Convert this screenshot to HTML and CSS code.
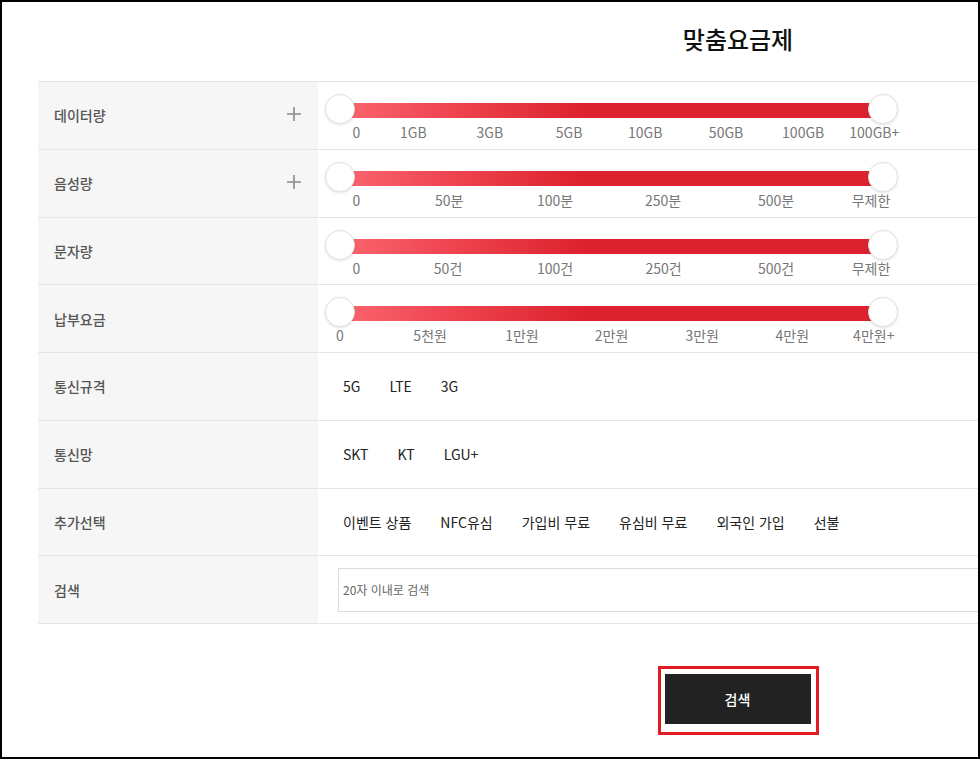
FILE: index.html
```html
<!DOCTYPE html>
<html lang="ko">
<head>
<meta charset="utf-8">
<title>맞춤요금제</title>
<link rel="stylesheet" href="styles.css">
</head>
<body>
<div class="frame">
  <div class="page">
    <h1 class="title">맞춤요금제</h1>
    <div class="table">
      <div class="row">
        <div class="label"><span>데이터량</span>
          <svg class="plus" width="14" height="14" viewBox="0 0 14 14"><path d="M7 0V14M0 7H14" stroke="#8a8a8a" stroke-width="1.6" fill="none"/></svg>
        </div>
        <div class="content content-slider">
          <div class="slider">
            <div class="track-wrap">
              <div class="track"></div>
              <span class="thumb thumb-left"></span>
              <span class="thumb thumb-right"></span>
            </div>
            <div class="ticks">
              <span class="tick" style="left:3%">0</span>
              <span class="tick" style="left:13.5%">1GB</span>
              <span class="tick" style="left:27.6%">3GB</span>
              <span class="tick" style="left:42.2%">5GB</span>
              <span class="tick" style="left:56.2%">10GB</span>
              <span class="tick" style="left:71.1%">50GB</span>
              <span class="tick" style="left:85.3%">100GB</span>
              <span class="tick" style="left:98.4%">100GB+</span>
            </div>
          </div>
        </div>
      </div>
      <div class="row">
        <div class="label"><span>음성량</span>
          <svg class="plus" width="14" height="14" viewBox="0 0 14 14"><path d="M7 0V14M0 7H14" stroke="#8a8a8a" stroke-width="1.6" fill="none"/></svg>
        </div>
        <div class="content content-slider">
          <div class="slider">
            <div class="track-wrap">
              <div class="track"></div>
              <span class="thumb thumb-left"></span>
              <span class="thumb thumb-right"></span>
            </div>
            <div class="ticks">
              <span class="tick" style="left:3%">0</span>
              <span class="tick" style="left:20.1%">50분</span>
              <span class="tick" style="left:39.6%">100분</span>
              <span class="tick" style="left:59.5%">250분</span>
              <span class="tick" style="left:80.3%">500분</span>
              <span class="tick" style="left:97.8%">무제한</span>
            </div>
          </div>
        </div>
      </div>
      <div class="row">
        <div class="label"><span>문자량</span></div>
        <div class="content content-slider">
          <div class="slider">
            <div class="track-wrap">
              <div class="track"></div>
              <span class="thumb thumb-left"></span>
              <span class="thumb thumb-right"></span>
            </div>
            <div class="ticks">
              <span class="tick" style="left:3%">0</span>
              <span class="tick" style="left:19.9%">50건</span>
              <span class="tick" style="left:39.6%">100건</span>
              <span class="tick" style="left:59.6%">250건</span>
              <span class="tick" style="left:80.3%">500건</span>
              <span class="tick" style="left:97.8%">무제한</span>
            </div>
          </div>
        </div>
      </div>
      <div class="row">
        <div class="label"><span>납부요금</span></div>
        <div class="content content-slider">
          <div class="slider">
            <div class="track-wrap">
              <div class="track"></div>
              <span class="thumb thumb-left"></span>
              <span class="thumb thumb-right"></span>
            </div>
            <div class="ticks">
              <span class="tick" style="left:0%">0</span>
              <span class="tick" style="left:16.6%">5천원</span>
              <span class="tick" style="left:33.5%">1만원</span>
              <span class="tick" style="left:50%">2만원</span>
              <span class="tick" style="left:66.7%">3만원</span>
              <span class="tick" style="left:83.3%">4만원</span>
              <span class="tick" style="left:98.3%">4만원+</span>
            </div>
          </div>
        </div>
      </div>
      <div class="row">
        <div class="label"><span>통신규격</span></div>
        <div class="content options">
          <span>5G</span><span>LTE</span><span>3G</span>
        </div>
      </div>
      <div class="row">
        <div class="label"><span>통신망</span></div>
        <div class="content options">
          <span>SKT</span><span>KT</span><span>LGU+</span>
        </div>
      </div>
      <div class="row">
        <div class="label"><span>추가선택</span></div>
        <div class="content options">
          <span>이벤트 상품</span><span>NFC유심</span><span>가입비 무료</span><span>유심비 무료</span><span>외국인 가입</span><span>선불</span>
        </div>
      </div>
      <div class="row">
        <div class="label"><span>검색</span></div>
        <div class="content search-cell">
          <input class="search-input" type="text" placeholder="20자 이내로 검색">
        </div>
      </div>
    </div>
    <div class="actions">
      <div class="btn-highlight">
        <button class="btn-search" type="button">검색</button>
      </div>
    </div>
  </div>
</div>
</body>
</html>
```
FILE: styles.css
```css
* { box-sizing: border-box; }
html, body { margin: 0; padding: 0; background: #fff; }
body {
  font-family: "Noto Sans CJK KR", "Noto Sans", sans-serif;
  color: #222;
}
.frame {
  width: 980px;
  height: 759px;
  border: 2px solid #000;
  overflow: hidden;
  position: relative;
}
.page {
  width: 1400px;
  margin-left: 36px;
}
.title {
  margin: 0;
  height: 79px;
  padding-top: 19px;
  font-size: 24px;
  line-height: 36px;
  font-weight: 500;
  color: #111;
  text-align: center;
}
.table {
  border-top: 1px solid #e5e5e5;
}
.row {
  display: flex;
  height: 67.75px;
  border-bottom: 1px solid #e5e5e5;
}
.label {
  width: 280px;
  flex: none;
  background: #f6f6f6;
  display: flex;
  align-items: center;
  justify-content: space-between;
  padding: 0 17px 0 16px;
  font-size: 14px;
  font-weight: 500;
  color: #555;
}
.plus { display: block; margin-top: -3px; }
.content {
  flex: 1;
  display: flex;
  align-items: center;
  padding-left: 25px;
}
.content-slider {
  align-items: flex-start;
  padding-left: 7px;
  padding-top: 12px;
}
.slider {
  width: 573px;
}
.track-wrap {
  position: relative;
  height: 30px;
  padding: 9px 15px 0;
}
.track {
  height: 15px;
  background: linear-gradient(90deg, #fb6670 0%, #ee4551 20%, #dc222e 45%, #dc222e 100%);
}
.thumb {
  position: absolute;
  top: 0;
  width: 30px;
  height: 30px;
  border-radius: 50%;
  background: #fff;
  border: 1px solid #e2e2e2;
  box-shadow: 0 1px 3px rgba(0,0,0,0.12);
}
.thumb-left { left: 0; }
.thumb-right { right: 0; }
.ticks {
  position: relative;
  height: 20px;
  margin: -2px 15px 0;
  font-size: 14px;
  line-height: 20px;
  color: #777;
}
.tick {
  position: absolute;
  top: 0;
  transform: translateX(-50%);
  white-space: nowrap;
}
.options {
  gap: 29px;
  font-size: 14px;
  color: #222;
}
.search-cell {
  padding-left: 20px;
  padding-right: 40px;
}
.search-input {
  width: 100%;
  height: 44px;
  border: 1px solid #dcdcdc;
  padding: 0 4px;
  font-family: "Noto Sans CJK KR", "Noto Sans", sans-serif;
  font-size: 12px;
  color: #555;
  outline: none;
}
.search-input::placeholder { color: #666; }
.actions {
  display: flex;
  justify-content: center;
  padding-top: 42px;
}
.btn-highlight {
  border: 3px solid #e31b23;
  padding: 5px 5px 8px 4px;
}
.btn-search {
  display: block;
  width: 146px;
  height: 50px;
  border: 0;
  background: #222;
  color: #fff;
  font-family: "Noto Sans CJK KR", "Noto Sans", sans-serif;
  font-size: 14px;
  font-weight: 500;
  padding: 0;
}
```
